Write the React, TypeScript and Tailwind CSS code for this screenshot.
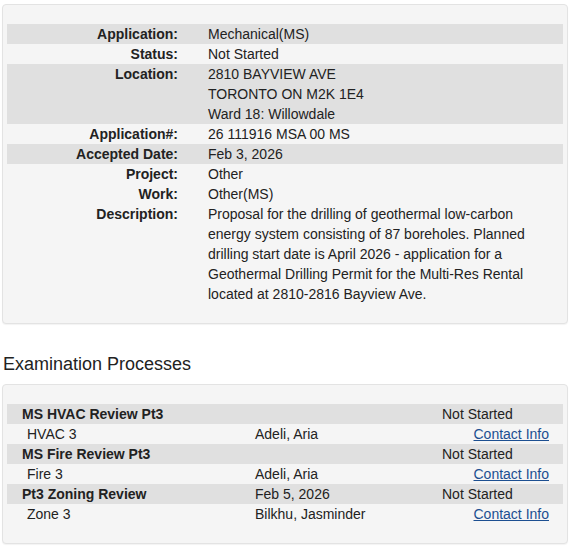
import React from 'react';

// permit application detail + examination processes
const details = [
  { label: 'Application:', value: ['Mechanical(MS)'], shaded: true },
  { label: 'Status:', value: ['Not Started'], shaded: false },
  { label: 'Location:', value: ['2810 BAYVIEW AVE', 'TORONTO ON M2K 1E4', 'Ward 18: Willowdale'], shaded: true },
  { label: 'Application#:', value: ['26 111916 MSA 00 MS'], shaded: false },
  { label: 'Accepted Date:', value: ['Feb 3, 2026'], shaded: true },
  { label: 'Project:', value: ['Other'], shaded: false },
  { label: 'Work:', value: ['Other(MS)'], shaded: false },
  {
    label: 'Description:',
    value: [
      'Proposal for the drilling of geothermal low-carbon energy system consisting of 87 boreholes. Planned drilling start date is April 2026 - application for a Geothermal Drilling Permit for the Multi-Res Rental located at 2810-2816 Bayview Ave.',
    ],
    shaded: false,
  },
];

const processes = [
  { name: 'MS HVAC Review Pt3', date: '', status: 'Not Started', task: 'HVAC 3', examiner: 'Adeli, Aria' },
  { name: 'MS Fire Review Pt3', date: '', status: 'Not Started', task: 'Fire 3', examiner: 'Adeli, Aria' },
  { name: 'Pt3 Zoning Review', date: 'Feb 5, 2026', status: 'Not Started', task: 'Zone 3', examiner: 'Bilkhu, Jasminder' },
];

export default function App() {
  return (
    <div className="min-h-screen bg-white pt-[4px] text-[14px] leading-[20px] text-[#222]" style={{ fontFamily: '"Liberation Sans", Arial, sans-serif' }}>
      {/* --- DETAILS PANEL --- */}
      <div className="ml-[2px] mr-[3px] rounded-[4px] border border-[#e3e3e3] bg-[#f5f5f5] px-[4px] pt-[19px] pb-[19px] shadow-[0_1px_1px_rgba(0,0,0,0.05)]">
        {details.map((row) => (
          <div key={row.label} className={`flex ${row.shaded ? 'bg-[#e0e0e0]' : ''}`}>
            <div className="w-[171px] shrink-0 text-right font-bold">{row.label}</div>
            <div className="pl-[30px] pr-[8px]">
              {row.value.map((line) => (
                <div key={line}>{line}</div>
              ))}
            </div>
          </div>
        ))}
      </div>

      {/* --- EXAMINATION PROCESSES --- */}
      <h2 className="mt-[28px] mb-[8px] pl-[3px] text-[18px] leading-[24px] font-normal">Examination Processes</h2>

      <div className="ml-[2px] mr-[3px] rounded-[4px] border border-[#e3e3e3] bg-[#f5f5f5] px-[4px] pt-[19px] pb-[19px] shadow-[0_1px_1px_rgba(0,0,0,0.05)]">
        {processes.map((p) => (
          <React.Fragment key={p.name}>
            <div className="grid grid-cols-[248px_187px_1fr] bg-[#e0e0e0]">
              <div className="pl-[15px] font-bold">{p.name}</div>
              <div>{p.date}</div>
              <div>{p.status}</div>
            </div>
            <div className="grid grid-cols-[248px_187px_1fr]">
              <div className="pl-[20px]">{p.task}</div>
              <div>{p.examiner}</div>
              <div className="pr-[14px] text-right">
                <a href="#" className="text-[#1c4f91] underline">Contact Info</a>
              </div>
            </div>
          </React.Fragment>
        ))}
      </div>
    </div>
  );
}
